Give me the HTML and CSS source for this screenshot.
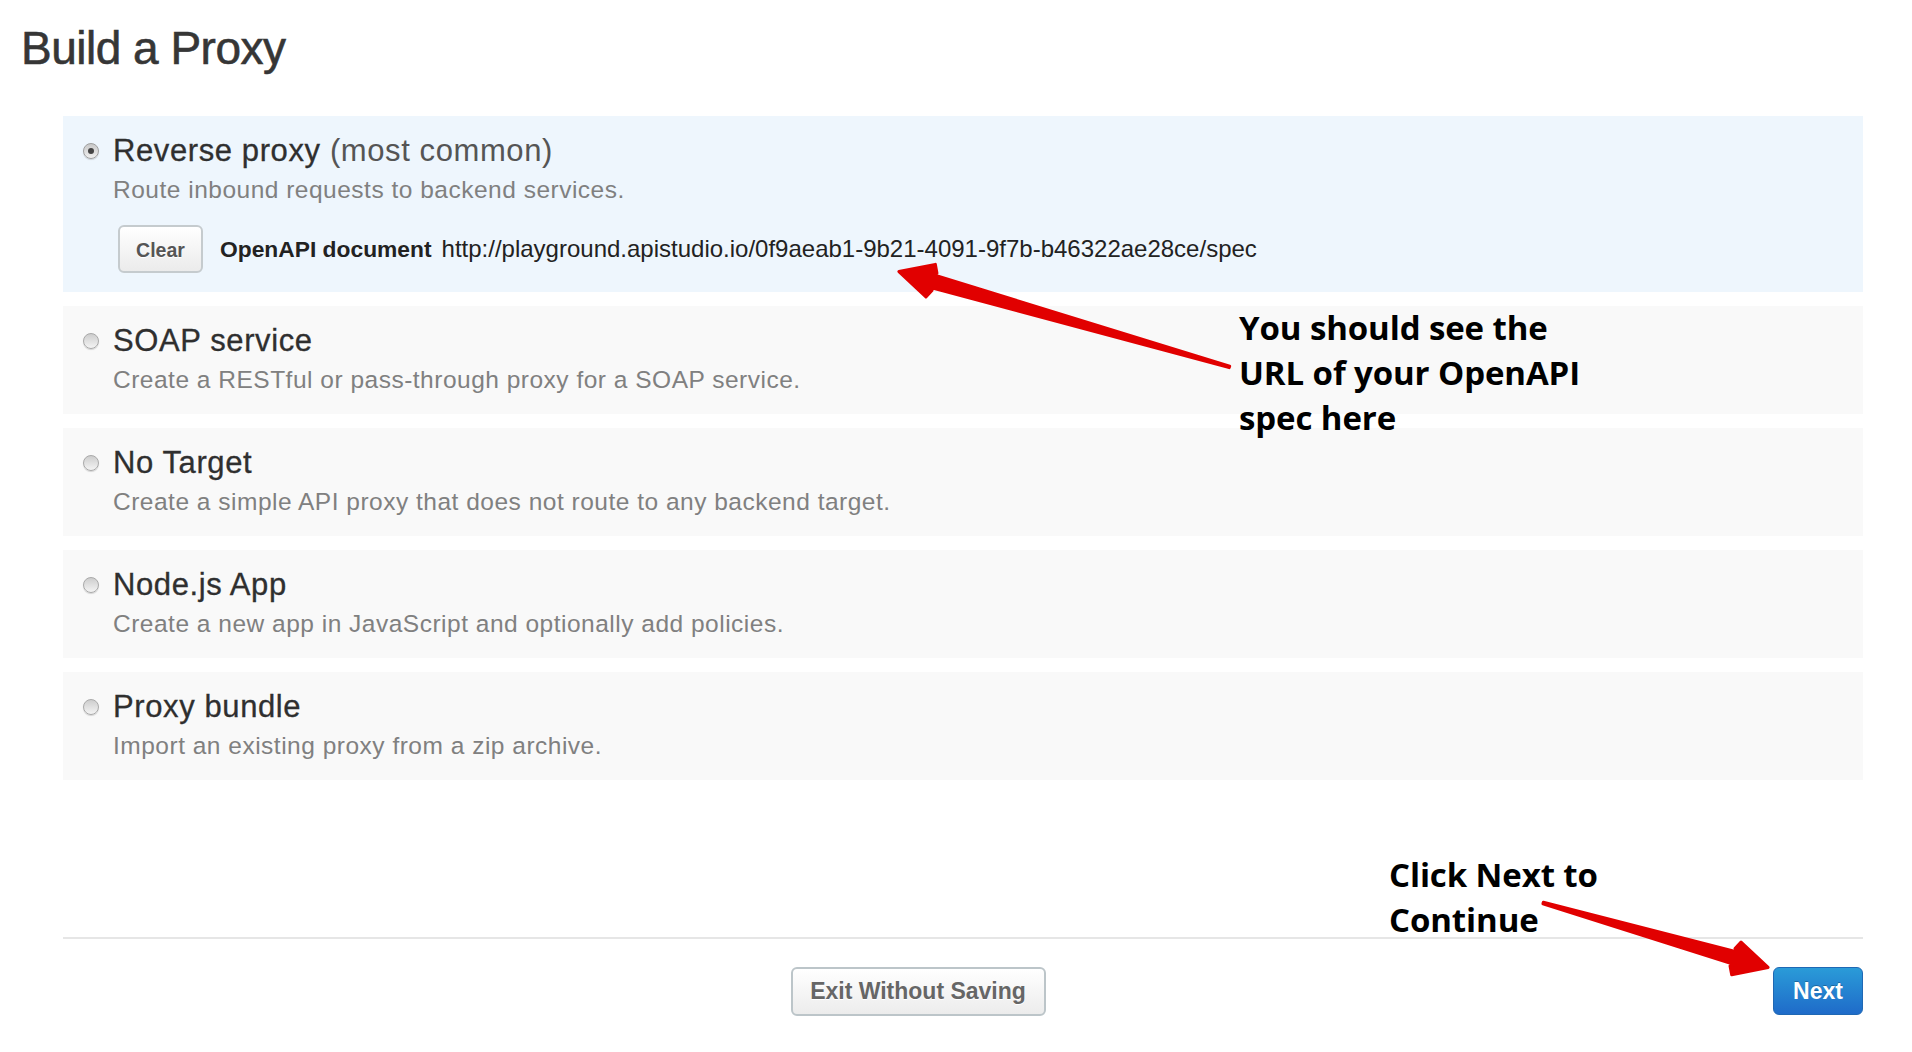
FILE: index.html
```html
<!DOCTYPE html>
<html>
<head>
<meta charset="utf-8">
<title>Build a Proxy</title>
<link rel="stylesheet" href="styles.css">
</head>
<body>
<div class="page">
  <h1 class="title">Build a Proxy</h1>
  <div class="options">
    <div class="option selected">
      <span class="radio checked"></span>
      <div class="option-body">
        <div class="option-title">Reverse proxy <span class="light">(most common)</span></div>
        <div class="option-desc">Route inbound requests to backend services.</div>
        <div class="spec-row">
          <button class="btn btn-clear">Clear</button>
          <span class="spec-label">OpenAPI document</span>
          <span class="spec-url">http://playground.apistudio.io/0f9aeab1-9b21-4091-9f7b-b46322ae28ce/spec</span>
        </div>
      </div>
    </div>
    <div class="option">
      <span class="radio"></span>
      <div class="option-body">
        <div class="option-title">SOAP service</div>
        <div class="option-desc">Create a RESTful or pass-through proxy for a SOAP service.</div>
      </div>
    </div>
    <div class="option">
      <span class="radio"></span>
      <div class="option-body">
        <div class="option-title">No Target</div>
        <div class="option-desc">Create a simple API proxy that does not route to any backend target.</div>
      </div>
    </div>
    <div class="option">
      <span class="radio"></span>
      <div class="option-body">
        <div class="option-title">Node.js App</div>
        <div class="option-desc">Create a new app in JavaScript and optionally add policies.</div>
      </div>
    </div>
    <div class="option">
      <span class="radio"></span>
      <div class="option-body">
        <div class="option-title">Proxy bundle</div>
        <div class="option-desc">Import an existing proxy from a zip archive.</div>
      </div>
    </div>
  </div>
  <div class="footer">
    <div class="footer-center">
      <button class="btn btn-exit">Exit Without Saving</button>
    </div>
    <button class="btn btn-next">Next</button>
  </div>
</div>

<svg class="arrows" width="1912" height="1052" viewBox="0 0 1912 1052">
  <g transform="translate(897 271) rotate(16.08)">
    <path class="arrow" d="M2,0 L35,-17 L39,-9 L35,-6.5 L346,-0.8 L346,0.8 L35,6.5 L39,9 L35,17 Z"/>
  </g>
  <g transform="translate(1770 968) rotate(-164)">
    <path class="arrow" d="M2,0 L35,-17 L39,-9 L35,-6.5 L236,-0.8 L236,0.8 L35,6.5 L39,9 L35,17 Z"/>
  </g>
</svg>

<div class="note note-spec">You should see the<br>URL of your OpenAPI<br>spec here</div>
<div class="note note-next">Click Next to<br>Continue</div>
</body>
</html>
```

FILE: styles.css
```css
html, body {
  margin: 0;
  padding: 0;
  background: #ffffff;
}

body {
  position: relative;
  width: 1912px;
  height: 1052px;
  overflow: hidden;
  font-family: "Liberation Sans", Arial, Helvetica, sans-serif;
  color: #333333;
}

.page {
  padding: 20px 49px 0 21px;
}

.title {
  margin: 0;
  font-size: 46px;
  line-height: 56px;
  font-weight: normal;
  letter-spacing: -0.5px;
  color: #363636;
  -webkit-text-stroke: 0.6px #363636;
}

.options {
  margin: 40px 0 0 42px;
  display: flex;
  flex-direction: column;
  gap: 14px;
}

.option {
  display: flex;
  align-items: flex-start;
  background: #f9f9f9;
  padding: 17px 20px 20px 20px;
  height: 108px;
  box-sizing: border-box;
}

.option.selected {
  background: #eef6fd;
  height: 176px;
  padding-bottom: 19px;
}

.radio {
  flex: none;
  width: 16px;
  height: 16px;
  margin: 10px 14px 0 0;
  border-radius: 50%;
  box-sizing: border-box;
  border: 1px solid #a9a9a9;
  background: linear-gradient(#cdcdcd, #f4f4f4);
  box-shadow: 0 1px 1px rgba(0, 0, 0, 0.15);
  position: relative;
}

.radio.checked {
  background: linear-gradient(#c8c8c8, #f0f0f0);
  border-color: #9f9f9f;
}

.radio.checked::after {
  content: "";
  position: absolute;
  left: 4px;
  top: 4px;
  width: 6px;
  height: 6px;
  border-radius: 50%;
  background: #444444;
}

.option-body {
  display: flex;
  flex-direction: column;
}

.option-title {
  font-size: 31px;
  line-height: 36px;
  letter-spacing: 0.6px;
  color: #2f2f2f;
  -webkit-text-stroke: 0.3px #2f2f2f;
}

.option-title .light {
  color: #555555;
  -webkit-text-stroke: 0;
}

.option-desc {
  margin-top: 6px;
  font-size: 24.5px;
  line-height: 30px;
  letter-spacing: 0.5px;
  color: #808080;
}

.spec-row {
  display: flex;
  align-items: center;
  margin-top: 20px;
  margin-left: 5px;
}

.btn {
  font-family: "Liberation Sans", Arial, Helvetica, sans-serif;
  font-weight: bold;
  box-sizing: border-box;
  border-radius: 6px;
  cursor: pointer;
  padding: 0;
}

.btn-clear {
  width: 85px;
  height: 48px;
  padding-top: 3px;
  border: 2px solid #c5cbce;
  background: linear-gradient(#ffffff, #ebebeb);
  color: #555555;
  font-size: 19.5px;
  text-shadow: 0 1px 0 #ffffff;
}

.spec-label {
  margin-left: 17px;
  font-weight: bold;
  font-size: 22.8px;
  color: #222222;
}

.spec-url {
  margin-left: 10px;
  font-size: 24px;
  color: #222222;
}

.footer {
  margin: 157px 0 0 42px;
  border-top: 2px solid #e6e6e6;
  padding-top: 28px;
  display: flex;
  align-items: flex-start;
}

.footer-center {
  flex: 1;
  display: flex;
  justify-content: center;
}

.btn-exit {
  width: 255px;
  height: 49px;
  border: 2px solid #bcc5c9;
  background: linear-gradient(#ffffff, #ececec);
  color: #666666;
  font-size: 23px;
  text-shadow: 0 1px 0 #ffffff;
}

.btn-next {
  width: 90px;
  height: 48px;
  border: 1px solid #1f68b4;
  background: linear-gradient(#2a9bd8, #1f6bc9);
  color: #ffffff;
  font-size: 23px;
  text-shadow: 0 -1px 0 rgba(0, 0, 0, 0.25);
}

.arrows {
  position: absolute;
  left: 0;
  top: 0;
  pointer-events: none;
}

.arrow {
  fill: #e10000;
  stroke: #e10000;
  stroke-width: 3;
  stroke-linejoin: round;
}

.note {
  position: absolute;
  font-family: "Open Sans", "DejaVu Sans", sans-serif;
  font-weight: 700;
  font-size: 33px;
  line-height: 45px;
  letter-spacing: -0.1px;
  color: #000000;
  white-space: nowrap;
}

.note-spec {
  left: 1239px;
  top: 305px;
}

.note-next {
  left: 1389px;
  top: 852px;
}
```
